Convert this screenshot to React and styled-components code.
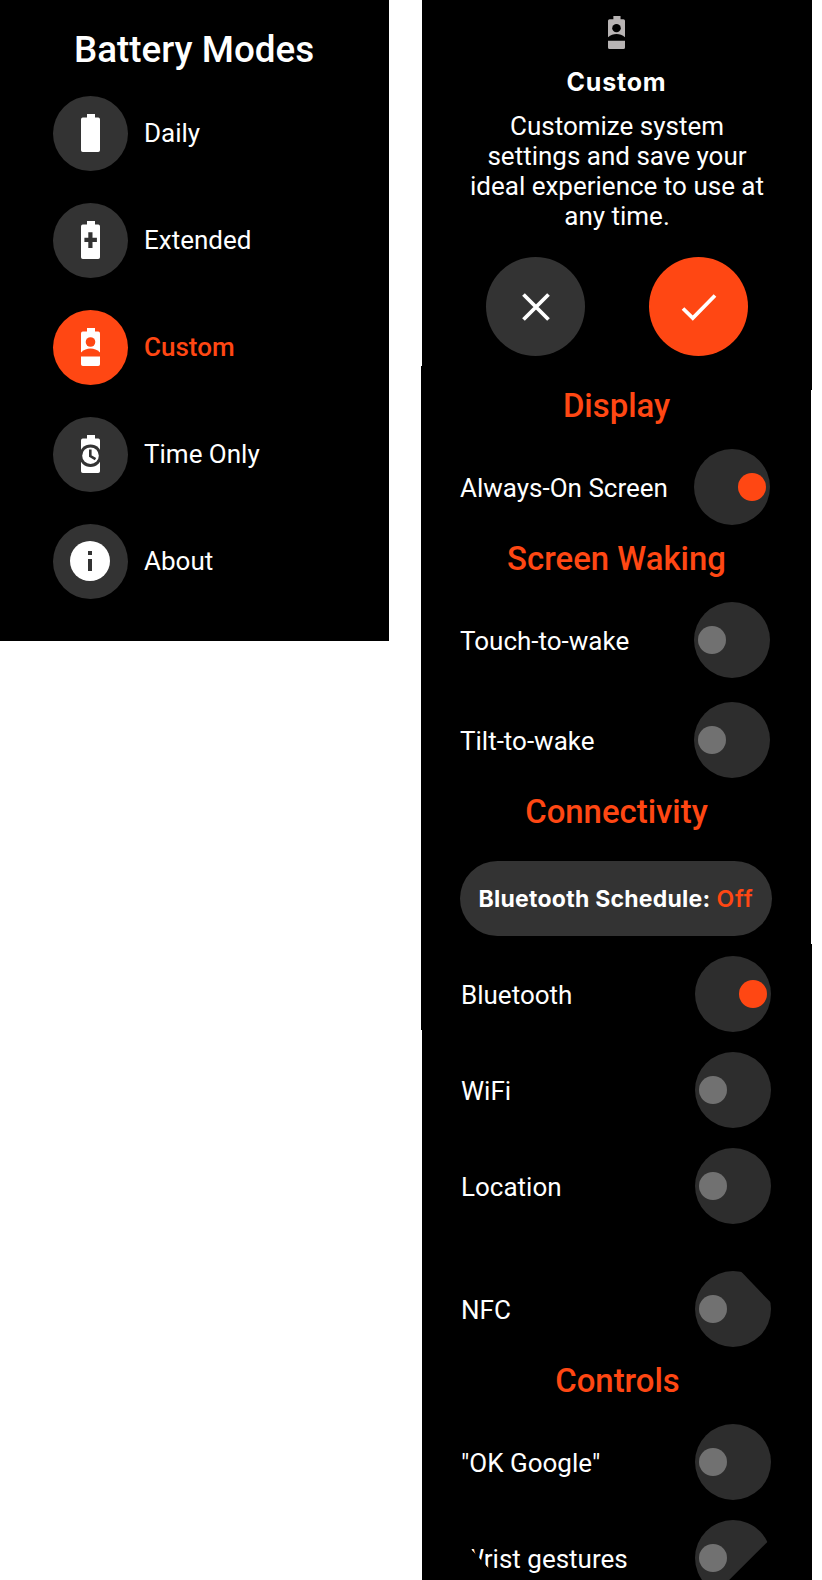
import React from "react";
import styled, { createGlobalStyle, css } from "styled-components";

const ORANGE = "#ff4713";
const SURFACE = "#333333";

const GlobalStyle = createGlobalStyle`
  body {
    margin: 0;
    background: #ffffff;
    font-family: Roboto, "Liberation Sans", sans-serif;
    color: #ffffff;
  }
`;

const Page = styled.main`
  display: flex;
  align-items: flex-start;
  gap: 32px;
  width: 822px;
  height: 1580px;
  overflow: hidden;
`;

/* ---------- battery modes ---------- */

const ModesPanel = styled.section`
  box-sizing: border-box;
  width: 389px;
  height: 641px;
  padding: 28px 53px 0;
  background: #000000;
`;

const ModesTitle = styled.h1`
  margin: 0 0 24px 21px;
  font-size: 36.8px;
  font-weight: 500;
  line-height: 44px;
  white-space: nowrap;
`;

const ModeList = styled.ul`
  display: flex;
  flex-direction: column;
  gap: 32px;
  margin: 0;
  padding: 0;
  list-style: none;
`;

const ModeItem = styled.li`
  display: flex;
  align-items: center;
  gap: 16px;
  height: 75px;
`;

const ModeBadge = styled.span`
  display: flex;
  align-items: center;
  justify-content: center;
  box-sizing: border-box;
  width: 75px;
  height: 75px;
  padding: 0 ${(p) => (p.$wide ? 1 : 0)}px 1px 0;
  border-radius: 50%;
  background: ${(p) => (p.$active ? ORANGE : SURFACE)};
`;

const ModeLabel = styled.span`
  padding-bottom: 2px;
  font-size: 26px;
  font-weight: ${(p) => (p.$active ? 500 : 400)};
  line-height: 30px;
  color: ${(p) => (p.$active ? ORANGE : "#ffffff")};
`;

/* ---------- custom mode settings ---------- */

const SettingsPanel = styled.section`
  display: flex;
  flex-direction: column;
  box-sizing: border-box;
  width: 391px;
  height: 1580px;
  padding-top: 16px;
  background: #000000;
  clip-path: polygon(
    1px 0, 391px 0, 391px 390px, 390px 390px, 390px 944px, 391px 944px,
    391px 1580px, 1px 1580px, 1px 1030px, 0 1030px, 0 366px, 1px 366px
  );
`;

const Intro = styled.header`
  display: flex;
  flex: none;
  flex-direction: column;
  align-items: center;
  height: 241px;
`;

const IntroTitle = styled.h2`
  margin: 15px 0 11px;
  font-family: Inter, "Liberation Sans", sans-serif;
  font-size: 25px;
  font-weight: 700;
  line-height: 36px;
  letter-spacing: 0.8px;
`;

const IntroText = styled.p`
  margin: 0 0 0 1px;
  width: 310px;
  font-size: 26px;
  line-height: 30px;
  text-align: center;
`;

const Actions = styled.div`
  display: flex;
  flex: none;
  gap: 64px;
  padding-left: 65px;
`;

const RoundButton = styled.button`
  display: flex;
  align-items: center;
  justify-content: center;
  width: 99px;
  height: 99px;
  padding: 0;
  border: 0;
  border-radius: 50%;
  background: ${(p) => (p.$primary ? ORANGE : SURFACE)};
`;

const SectionTitle = styled.h3`
  flex: none;
  margin: ${(p) => p.$above}px 0 ${(p) => p.$below}px ${(p) => p.$shift || 0}px;
  font-size: 32.9px;
  font-weight: 500;
  line-height: 40px;
  text-align: center;
  color: ${ORANGE};
`;

const Rows = styled.div`
  display: flex;
  flex: none;
  flex-direction: column;
  gap: ${(p) => p.$gap || 0}px;
  padding-left: ${(p) => p.$inset}px;
`;

const Row = styled.div`
  display: flex;
  align-items: center;
  width: 310px;
  height: 76px;
  margin-top: ${(p) => p.$extra || 0}px;
`;

const RowLabel = styled.span`
  flex: 1;
  padding-top: 2px;
  font-size: 26px;
  line-height: 30px;
  white-space: nowrap;
  ${(p) =>
    p.$cut &&
    css`
      clip-path: polygon(9px 0, 234px 0, 234px 32px, 33px 32px, 9px 6px);
    `}
`;

const Knob = styled.span`
  width: 28px;
  height: 28px;
  border-radius: 50%;
  background: ${(p) => (p.$on ? ORANGE : "#717171")};
`;

const cuts = {
  top: "polygon(0 0, 45.6px 0, 76px 31.8px, 76px 76px, 0 76px)",
  bottom: "polygon(0 0, 76px 0, 76px 18.4px, 18px 76px, 0 76px)",
};

const Toggle = styled.span`
  display: flex;
  flex: none;
  align-items: center;
  justify-content: ${(p) => (p.$on ? "flex-end" : "flex-start")};
  box-sizing: border-box;
  width: 76px;
  height: 76px;
  padding: 0 4px;
  border-radius: 50%;
  background: #2d2d2d;
  clip-path: ${(p) => cuts[p.$cut] || "none"};
`;

const SchedulePill = styled.button`
  display: flex;
  flex: none;
  align-items: center;
  justify-content: center;
  gap: 6px;
  width: 312px;
  height: 75px;
  margin: 0 0 20px 39px;
  padding: 0;
  border: 0;
  border-radius: 38px;
  background: ${SURFACE};
  color: #ffffff;
  font-family: Inter, "Liberation Sans", sans-serif;
  font-size: 23px;
  font-weight: 700;
  letter-spacing: 0.25px;
  white-space: nowrap;
`;

const ScheduleValue = styled.span`
  font-weight: 600;
  letter-spacing: 0.8px;
  color: ${ORANGE};
`;

/* ---------- icons ---------- */

const CELL =
  "M6 0h8v3.6h3.2q1.8 0 1.8 1.8v30.8q0 1.8-1.8 1.8H1.8Q0 38 0 36.2V5.4q0-1.8 1.8-1.8H6z";

function BatteryIcon({ kind, fill = "#ffffff", hole = SURFACE, width = 19, height = 38 }) {
  return (
    <svg width={width} height={height} viewBox="0 0 19 38" preserveAspectRatio="none">
      <path d={CELL} fill={fill} />
      {kind === "extended" && (
        <path d="M7.3 11.3h4.2v5.5h4.4v4.2h-4.4v6H7.3v-6H3.4v-4.2h3.9z" fill={hole} />
      )}
      {kind === "custom" && (
        <g fill={hole}>
          <circle cx="9.5" cy="14" r="4.8" />
          <path d="M0 24.4C3 21.8 6 20.6 9.5 20.6S16 21.8 19 24.4v4.1H0z" />
        </g>
      )}
      {kind === "time" && (
        <>
          <circle cx="9.5" cy="20.7" r="11.3" fill={hole} />
          <circle cx="9.5" cy="20.7" r="8.3" fill={fill} />
          <path d="M9.3 14.5v6.6l5.2 3.1" fill="none" stroke={hole} strokeWidth="2.6" />
        </>
      )}
    </svg>
  );
}

function InfoIcon() {
  return (
    <svg width="40" height="40" viewBox="0 0 40 40">
      <circle cx="20" cy="20" r="20" fill="#ffffff" />
      <path d="M18 10h4v4h-4zM18 18h4v12h-4z" fill={SURFACE} />
    </svg>
  );
}

function CrossIcon() {
  return (
    <svg width="28" height="28" viewBox="0 0 28 28">
      <path d="M1.5 1.5l25 25M26.5 1.5l-25 25" stroke="#ffffff" strokeWidth="3.8" />
    </svg>
  );
}

function CheckIcon() {
  return (
    <svg width="36" height="28" viewBox="0 0 36 28">
      <path d="M2 15.5l9.8 9.6L34 2.5" fill="none" stroke="#ffffff" strokeWidth="3.7" />
    </svg>
  );
}

/* ---------- content ---------- */

const modes = [
  { label: "Daily", kind: "daily" },
  { label: "Extended", kind: "extended" },
  { label: "Custom", kind: "custom", active: true },
  { label: "Time Only", kind: "time" },
  { label: "About", kind: "info" },
];

function Setting({ label, on, cut, extra }) {
  return (
    <Row $extra={extra}>
      <RowLabel $cut={cut === "bottom"}>{label}</RowLabel>
      <Toggle $on={on} $cut={cut} role="switch" aria-checked={!!on} aria-label={label}>
        <Knob $on={on} />
      </Toggle>
    </Row>
  );
}

export default function App() {
  return (
    <>
      <GlobalStyle />
      <Page>
        <ModesPanel>
          <ModesTitle>Battery Modes</ModesTitle>
          <ModeList>
            {modes.map(({ label, kind, active }) => (
              <ModeItem key={label}>
                <ModeBadge $active={active} $wide={kind === "info"}>
                  {kind === "info" ? (
                    <InfoIcon />
                  ) : (
                    <BatteryIcon kind={kind} hole={active ? ORANGE : SURFACE} />
                  )}
                </ModeBadge>
                <ModeLabel $active={active}>{label}</ModeLabel>
              </ModeItem>
            ))}
          </ModeList>
        </ModesPanel>

        <SettingsPanel>
          <Intro>
            <BatteryIcon kind="custom" fill="#b8b4b4" hole="#000000" width={17} height={33} />
            <IntroTitle>Custom</IntroTitle>
            <IntroText>
              Customize system settings and save your ideal experience to use at any time.
            </IntroText>
          </Intro>
          <Actions>
            <RoundButton aria-label="Cancel">
              <CrossIcon />
            </RoundButton>
            <RoundButton $primary aria-label="Confirm">
              <CheckIcon />
            </RoundButton>
          </Actions>

          <SectionTitle $above={30} $below={23}>Display</SectionTitle>
          <Rows $inset={39}>
            <Setting label="Always-On Screen" on />
          </Rows>

          <SectionTitle $above={14} $below={23}>Screen Waking</SectionTitle>
          <Rows $inset={39} $gap={24}>
            <Setting label="Touch-to-wake" />
            <Setting label="Tilt-to-wake" />
          </Rows>

          <SectionTitle $above={14} $below={29}>Connectivity</SectionTitle>
          <SchedulePill>
            <span>Bluetooth Schedule:</span>
            <ScheduleValue>Off</ScheduleValue>
          </SchedulePill>
          <Rows $inset={40} $gap={20}>
            <Setting label="Bluetooth" on />
            <Setting label="WiFi" />
            <Setting label="Location" />
            <Setting label="NFC" cut="top" extra={27} />
          </Rows>

          <SectionTitle $above={14} $below={23} $shift={2}>Controls</SectionTitle>
          <Rows $inset={40} $gap={20}>
            <Setting label={'"OK Google"'} />
            <Setting label="Wrist gestures" cut="bottom" />
          </Rows>
        </SettingsPanel>
      </Page>
    </>
  );
}
